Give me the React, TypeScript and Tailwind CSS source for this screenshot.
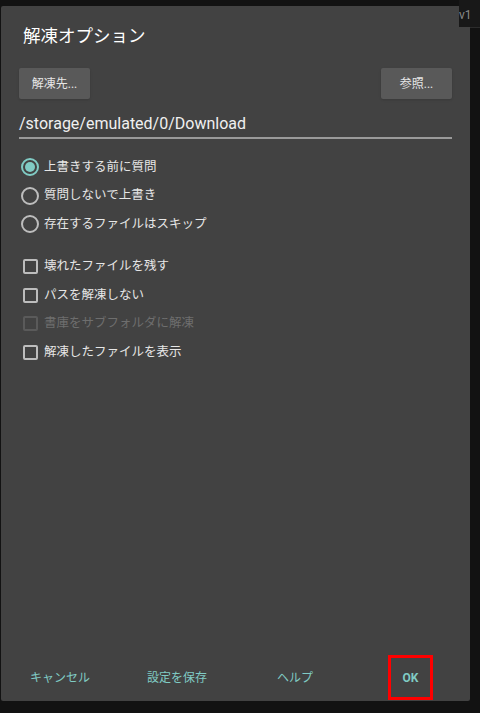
import React from 'react';

const font = { fontFamily: 'Roboto, "Noto Sans CJK JP", sans-serif' };

function Radio({ checked, label }: { checked?: boolean; label: string }) {
  return (
    <div className="flex items-center h-[28.5px]">
      <span
        className={`ml-[2px] w-[18px] h-[18px] rounded-full border-2 flex items-center justify-center ${
          checked ? 'border-[#80cbc4]' : 'border-[#bdbdbd]'
        }`}
      >
        {checked && <span className="w-[10px] h-[10px] rounded-full bg-[#80cbc4]" />}
      </span>
      <span className="ml-[5px] text-[12.5px] text-[#e6e6e6]">{label}</span>
    </div>
  );
}

function Check({ label, disabled }: { label: string; disabled?: boolean }) {
  return (
    <div className="flex items-center h-[28.5px]">
      <span
        className={`ml-[4px] w-[15px] h-[15px] rounded-[2px] border-2 ${
          disabled ? 'border-[#5a5a5a]' : 'border-[#bdbdbd]'
        }`}
      />
      <span className={`ml-[6px] text-[12.5px] ${disabled ? 'text-[#6e6e6e]' : 'text-[#e6e6e6]'}`}>
        {label}
      </span>
    </div>
  );
}

export default function App() {
  return (
    <div className="w-[480px] h-[713px] bg-[#121212] flex overflow-hidden" style={font}>
      <div className="ml-px mt-[6px] w-[469px] h-[695px] bg-[#424242] rounded-[2px] flex flex-col shrink-0">
        <div className="pl-[22px] pt-[16px] text-[17.5px] text-white leading-[28px]">解凍オプション</div>

        <div className="flex justify-between px-[18px] mt-[18px]">
          <button className="w-[71px] h-[31px] bg-[#595959] rounded-[2px] text-[12px] text-[#e6e6e6] shadow-sm">
            解凍先...
          </button>
          <button className="w-[71px] h-[31px] bg-[#595959] rounded-[2px] text-[12px] text-[#e6e6e6] shadow-sm">
            参照...
          </button>
        </div>

        <div className="mx-[18px] mt-[14px] border-b-2 border-[#9a9a9a] pb-[2px]">
          <div className="text-[16px] text-[#f0f0f0] leading-[22px]">/storage/emulated/0/Download</div>
        </div>

        <div className="px-[18px] mt-[14px]">
          <Radio checked label="上書きする前に質問" />
          <Radio label="質問しないで上書き" />
          <Radio label="存在するファイルはスキップ" />
        </div>

        <div className="px-[18px] mt-[14px]">
          <Check label="壊れたファイルを残す" />
          <Check label="パスを解凍しない" />
          <Check label="書庫をサブフォルダに解凍" disabled />
          <Check label="解凍したファイルを表示" />
        </div>

        <div className="flex-1" />

        <div className="flex items-center h-[45px] mb-px text-[12px] text-[#80cbc4]">
          <span className="ml-[29px] w-[60px]">キャンセル</span>
          <span className="ml-[57px] w-[60px]">設定を保存</span>
          <span className="ml-[70px] w-[36px]">ヘルプ</span>
          <span className="ml-[75px] w-[45px] h-[45px] border-[3px] border-[#ff0000] flex items-center justify-center font-bold text-[12px]">
            OK
          </span>
        </div>
      </div>
      <div className="flex-1 flex flex-col">
        <div className="h-[27px] bg-[#181818] text-[12px] text-[#8a8a8a] pt-[6px] -ml-[11px] overflow-hidden whitespace-nowrap">
          v1
        </div>
        <div className="h-px bg-[#2c2c2c]" />
        <div className="flex-1 bg-[#121212]" />
      </div>
    </div>
  );
}
